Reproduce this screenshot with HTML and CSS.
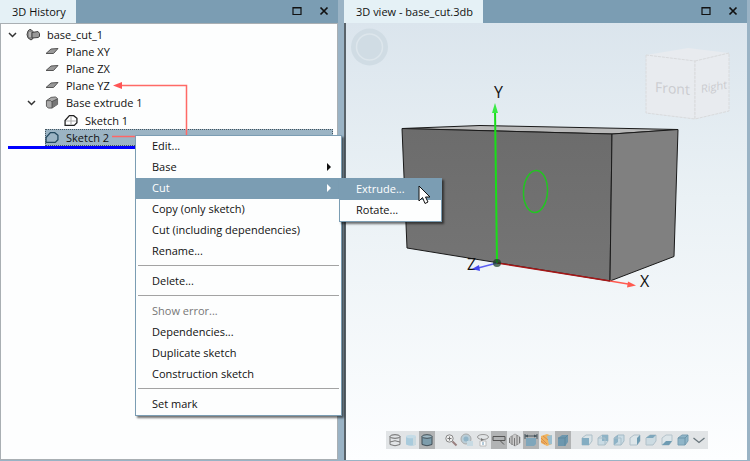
FILE: index.html
```html
<!DOCTYPE html>
<html lang="en">
<head>
<meta charset="utf-8">
<title>base_cut.3db</title>
<link rel="stylesheet" href="styles.css">
</head>
<body>
<svg class="defs" aria-hidden="true">
  <symbol id="i-chev" viewBox="0 0 9 6"><path d="M1 1l3.500 3.500L8 1" fill="none" stroke="#333" stroke-width="1.500"/></symbol>
  <symbol id="i-plane" viewBox="0 0 14 8"><path d="M1 6l5-4.500 7-.5-4.500 5z" fill="#999" stroke="#555"/></symbol>
  <symbol id="i-part" viewBox="0 0 14 12"><path d="M2 2.500Q3 .5 5 1l2 2v7l-2 1.500Q1 10 1 6z" fill="#8a8a8a" stroke="#444"/><path d="M6 4l6-1 1.500 2v3L12 9l-6 .5z" fill="#999" stroke="#444"/><path d="M4 3.500v5" stroke="#ddd"/></symbol>
  <symbol id="i-solid" viewBox="0 0 14 14"><path d="M1 5l5-3.500L11 1l2 2v6l-6 4H3L1 11z" fill="#aaa" stroke="#555"/><path d="M7 6l6-3v6l-6 4z" fill="#777"/><path d="M1 5h4.500L7 6.500V13M7 6l6-3" fill="none" stroke="#444" stroke-width=".8"/></symbol>
  <symbol id="i-sketch1" viewBox="0 0 13 12"><path d="M1 10.500V6l4-4.500h4L12 4v4l-2.500 2.500z" fill="#fff" stroke="#222" stroke-width="1.200"/><path d="M6.500 2v8M2 6.500h9" stroke="#aaa"/></symbol>
  <symbol id="i-sketch2" viewBox="0 0 13 12"><path d="M1 10.500V6l4-4.500h4L12 4v4l-2.500 2.500z" fill="none" stroke="#244a60" stroke-width="1.200"/></symbol>
  <symbol id="i-max" viewBox="0 0 10 10"><path d="M1 1.500h8v7H1zM1 2h8" fill="none" stroke="#111" stroke-width="1.200"/></symbol>
  <symbol id="i-close" viewBox="0 0 10 10"><path d="M1.500 1.500l7 7M8.500 1.500l-7 7" stroke="#111" stroke-width="1.700"/></symbol>
  <symbol id="t-wire" viewBox="0 0 14 14"><path d="M2 3.500v8q5 2.500 10 0v-8M2 9q5-2.500 10 0" fill="none" stroke="#777"/><ellipse cx="7" cy="3.500" rx="5" ry="1.800" fill="none" stroke="#666"/></symbol>
  <symbol id="t-shade" viewBox="0 0 14 14"><path d="M2 3.500v8q5 2.500 10 0v-8z" fill="#a9cbdc"/><ellipse cx="7" cy="3.500" rx="5" ry="1.800" fill="#c5dce7"/><path d="M9 5v7.500q2 0 3-1V4z" fill="#c9d9df"/></symbol>
  <symbol id="t-both" viewBox="0 0 14 14"><path d="M2 3.500v8q5 2.500 10 0v-8z" fill="#7d9dac" stroke="#414e56"/><ellipse cx="7" cy="3.500" rx="5" ry="1.800" fill="#9fb8c3" stroke="#414e56"/></symbol>
  <symbol id="t-zoom" viewBox="0 0 14 14"><circle cx="5.500" cy="5.500" r="3.700" fill="#eee" stroke="#888"/><path d="M8.500 8.500l4 4" stroke="#987f7f" stroke-width="2"/><path d="M3.500 5.500h4M5.500 3.500v4" stroke="#777"/></symbol>
  <symbol id="t-sphere" viewBox="0 0 14 14"><circle cx="6" cy="6" r="5" fill="#b9cdd7" stroke="#aaa"/><circle cx="6" cy="6" r="2.500" fill="#92b5c8"/><path d="M7 8h6v5H7z" fill="#c7dae3"/></symbol>
  <symbol id="t-rotate" viewBox="0 0 14 14"><ellipse cx="7" cy="4" rx="5.500" ry="2.500" fill="none" stroke="#999"/><path d="M4 8h6v5H4z" fill="#fff" stroke="#bbb"/><path d="M5 5l3 2-3 1z" fill="#777"/><path d="M7 9v3" stroke="#6897b5"/></symbol>
  <symbol id="t-plane" viewBox="0 0 14 14"><path d="M1 3.500h12v4H1zM8 7.500l4 4" fill="none" stroke="#555"/></symbol>
  <symbol id="t-section" viewBox="0 0 14 14"><path d="M2 4l5-3 5 3v6l-5 3-5-3z" fill="#ccc" stroke="#aaa"/><path d="M1.500 5v5M4 3v9M6.500 5v8M9 2v10M11.500 4v6" stroke="#777"/></symbol>
  <symbol id="t-dim" viewBox="0 0 14 14"><path d="M2 5h10v6l-2 2H2z" fill="#7fa6bb"/><path d="M1 1v5M13 1v5M1 3h12" stroke="#46545c" fill="none"/><path d="M1 3l3-1.500v3zM13 3l-3-1.500v3z" fill="#46545c"/></symbol>
  <symbol id="t-tex" viewBox="0 0 14 14"><path d="M1 3l6-2 5 2v8l-5 2-6-3z" fill="#efb45f"/><path d="M7 3l5-1v9l-3 1z" fill="#9cbfd0"/><path d="M1 5l6 6M1 8l4 3M3 3l5 4" stroke="#d98a4c"/></symbol>
  <symbol id="t-cube" viewBox="0 0 14 14"><path d="M2 5l4-3h6v7l-3 4H2z" fill="#6d97ae"/><path d="M2 5h7v8M9 5l3-3" fill="none" stroke="#5f879d"/></symbol>
  <symbol id="t-front" viewBox="0 0 14 14"><path d="M2 5l4-3h6v6l-3 4H2z" fill="#d9e3e7" stroke="#adbfc8"/><path d="M2 5h7v7H2z" fill="#84adc2"/></symbol>
  <symbol id="t-back" viewBox="0 0 14 14"><path d="M2 5l4-3h6v6l-3 4H2z" fill="#c9dbe4" stroke="#adbfc8"/><path d="M6 2h6v6H6z" fill="#8eb3c6"/><path d="M2 5h7v7" fill="none" stroke="#aabfca"/></symbol>
  <symbol id="t-left" viewBox="0 0 14 14"><path d="M2 5l4-3h6v6l-3 4H2z" fill="#c9dbe4" stroke="#a5bbc6"/><path d="M2 5l4-3v7l-4 3z" fill="#8eb3c6"/><path d="M2 5h7v7" fill="none" stroke="#aabfca"/></symbol>
  <symbol id="t-right" viewBox="0 0 14 14"><path d="M2 5l4-3h6v6l-3 4H2z" fill="#dce5e9" stroke="#b0c0c9"/><path d="M9 5l3-3v6l-3 4z" fill="#6e9bb2"/></symbol>
  <symbol id="t-top" viewBox="0 0 14 14"><path d="M2 5l4-3h6v6l-3 4H2z" fill="#ccdbe2" stroke="#b0c0c9"/><path d="M2 5l4-3h6L9 5z" fill="#7fa8bd"/></symbol>
  <symbol id="t-bottom" viewBox="0 0 14 14"><path d="M2 5l4-3h6v6l-3 4H2z" fill="#dce5e9" stroke="#b5c4cc"/><path d="M2 12l4-4h6l-3 4z" fill="#6e9bb2"/></symbol>
  <symbol id="t-iso" viewBox="0 0 14 14"><path d="M2 5l4-3h6v6l-3 4H2z" fill="#8fb5c8" stroke="#7ba0b4"/><path d="M2 5h7v7M9 5l3-3" fill="none" stroke="#6c95aa"/></symbol>
  <symbol id="t-more" viewBox="0 0 14 14"><path d="M1.500 5L7 9.500 12.500 5" fill="none" stroke="#68757c" stroke-width="1.300"/></symbol>
</svg>

<main class="workspace">
  <section class="pane history">
    <header class="pane-head">
      <h2 class="tab">3D History</h2>
      <div class="head-actions">
        <button aria-label="Maximize"><svg><use href="#i-max"/></svg></button>
        <button aria-label="Close"><svg><use href="#i-close"/></svg></button>
      </div>
    </header>
    <div class="tree-box">
      <ul class="tree">
        <li>
          <div class="node"><svg class="chev"><use href="#i-chev"/></svg><svg class="ico"><use href="#i-part"/></svg><span>base_cut_1</span></div>
          <ul>
            <li><div class="node leaf"><svg class="ico"><use href="#i-plane"/></svg><span>Plane XY</span></div></li>
            <li><div class="node leaf"><svg class="ico"><use href="#i-plane"/></svg><span>Plane ZX</span></div></li>
            <li><div class="node leaf"><svg class="ico"><use href="#i-plane"/></svg><span>Plane YZ</span></div></li>
            <li>
              <div class="node"><svg class="chev"><use href="#i-chev"/></svg><svg class="ico"><use href="#i-solid"/></svg><span>Base extrude 1</span></div>
              <ul class="inner"><li><div class="node leaf"><svg class="ico"><use href="#i-sketch1"/></svg><span>Sketch 1</span></div></li></ul>
            </li>
            <li><div class="node leaf selected"><svg class="ico"><use href="#i-sketch2"/></svg><span>Sketch 2</span></div></li>
          </ul>
          <div class="rollback"></div>
        </li>
      </ul>
    </div>
    <svg class="link-arrow" viewBox="0 0 80 56" aria-hidden="true"><path d="M8 5.500h66.500V55" fill="none" stroke="#ff6a66" stroke-width="1.500"/><path d="M1 5.500l9-3.500v7z" fill="#f55"/><path d="M0 56.500h24" stroke="#f66" stroke-width="1.500"/></svg>

    <ul class="menu context">
      <li><button>Edit...</button></li>
      <li><button>Base<i class="more"></i></button></li>
      <li class="open"><button>Cut<i class="more"></i></button>
        <ul class="menu sub">
          <li class="open"><button>Extrude...</button></li>
          <li><button>Rotate...</button></li>
        </ul>
        <svg class="cursor" viewBox="0 0 13 20" aria-hidden="true"><path d="M1 1v15l3.500-3.500L7 18.500l3-1.500-2.500-5H12z" fill="#fff" stroke="#111"/></svg>
      </li>
      <li><button>Copy (only sketch)</button></li>
      <li><button>Cut (including dependencies)</button></li>
      <li><button>Rename...</button></li>
      <li class="sep"></li>
      <li><button>Delete...</button></li>
      <li class="sep"></li>
      <li><button disabled>Show error...</button></li>
      <li><button>Dependencies...</button></li>
      <li><button>Duplicate sketch</button></li>
      <li><button>Construction sketch</button></li>
      <li class="sep"></li>
      <li><button>Set mark</button></li>
    </ul>
  </section>

  <section class="pane view">
    <header class="pane-head">
      <h2 class="tab">3D view - base_cut.3db</h2>
      <div class="head-actions">
        <button aria-label="Maximize"><svg><use href="#i-max"/></svg></button>
        <button aria-label="Close"><svg><use href="#i-close"/></svg></button>
      </div>
    </header>
    <div class="canvas">
      <svg class="scene" viewBox="346 23 401 437" role="img" aria-label="Extruded box with axes">
        <defs>
          <linearGradient id="front" x1="0" y1="0" x2="0" y2="1"><stop offset="0" stop-color="#6c6c6c"/><stop offset="1" stop-color="#757575"/></linearGradient>
        </defs>
        <circle cx="369.500" cy="47" r="18.500" fill="#d0dce4"/>
        <circle cx="369.500" cy="47" r="13" fill="none" stroke="#dde6ec" stroke-width="1.500"/>
        <g stroke="#d9dadc" stroke-dasharray="3 1" fill="#e8ebef">
          <path d="M646 55l42-7 41 5-34 8z" stroke="none"/>
          <path d="M646 55l49 6v58l-49-6z"/>
          <path d="M695 61l34-8v58l-34 8z"/>
        </g>
        <text class="face" transform="translate(655 92) skewY(5)">Front</text>
        <text class="face side" transform="translate(701 93) skewY(-10)">Right</text>
        <path d="M402 128.500L480 125.500 678 129.500 612 134z" fill="#b8b8b8" stroke="#1a1a1a"/>
        <path d="M402 128.500L612 134 610 281 407 248z" fill="url(#front)" stroke="#1a1a1a"/>
        <path d="M612 134L678 129.500 674 256.500 610 281z" fill="#808080" stroke="#1a1a1a"/>
        <text class="axis" x="467" y="270">Z</text>
        <path d="M497 263l-19 5" stroke="#5c60f4" stroke-width="1.500"/>
        <path d="M472 269l7-4 1 6z" fill="#4448ee"/>
        <path d="M497 263l113 18" stroke="#a81717" stroke-width="1.500"/>
        <path d="M610 281l18 3" stroke="#ff5a50" stroke-width="1.500"/>
        <path d="M636 285.500l-9 2 1-6z" fill="#ff5a50"/>
        <path d="M497 263L495 108" stroke="#18df18" stroke-width="2"/>
        <path d="M495 103l3 10h-6z" fill="#39ea45"/>
        <circle cx="497" cy="263" r="4" fill="#173a22" fill-opacity=".7"/>
        <ellipse cx="535.500" cy="191.500" rx="12" ry="21" fill="none" stroke="#22c522" stroke-width="1.500" transform="rotate(3 535.500 191.500)"/>
        <text class="axis" x="494" y="98">Y</text>
        <text class="axis" x="640" y="287">X</text>
      </svg>
      <div class="toolbar">
        <div class="group">
          <button aria-label="Wireframe"><svg><use href="#t-wire"/></svg></button>
          <button aria-label="Shaded"><svg><use href="#t-shade"/></svg></button>
          <button class="on" aria-label="Shaded with edges"><svg><use href="#t-both"/></svg></button>
        </div>
        <div class="group">
          <button aria-label="Zoom"><svg><use href="#t-zoom"/></svg></button>
          <button aria-label="Perspective"><svg><use href="#t-sphere"/></svg></button>
          <button aria-label="Rotate"><svg><use href="#t-rotate"/></svg></button>
          <button class="on" aria-label="Planes"><svg><use href="#t-plane"/></svg></button>
          <button aria-label="Section"><svg><use href="#t-section"/></svg></button>
          <button class="on" aria-label="Dimensions"><svg><use href="#t-dim"/></svg></button>
          <button aria-label="Texture"><svg><use href="#t-tex"/></svg></button>
          <button class="on" aria-label="Solid"><svg><use href="#t-cube"/></svg></button>
        </div>
        <div class="group">
          <button aria-label="Front view"><svg><use href="#t-front"/></svg></button>
          <button aria-label="Back view"><svg><use href="#t-back"/></svg></button>
          <button aria-label="Left view"><svg><use href="#t-left"/></svg></button>
          <button aria-label="Right view"><svg><use href="#t-right"/></svg></button>
          <button aria-label="Top view"><svg><use href="#t-top"/></svg></button>
          <button aria-label="Bottom view"><svg><use href="#t-bottom"/></svg></button>
          <button aria-label="Isometric view"><svg><use href="#t-iso"/></svg></button>
          <button aria-label="More"><svg><use href="#t-more"/></svg></button>
        </div>
      </div>
    </div>
  </section>
</main>
</body>
</html>
```

FILE: styles.css
```css
* { box-sizing: border-box; }
body {
  margin: 0;
  font: 11px/17px "Open Sans", "Noto Sans", sans-serif;
  color: #111;
  background: #9ab3c5;
}
ul { list-style: none; margin: 0; padding: 0; }
button { font: inherit; color: inherit; border: 0; padding: 0; background: none; }
svg { display: block; }
.defs { position: absolute; width: 0; height: 0; }

.workspace {
  display: grid;
  grid-template-columns: 338fr 403fr;
  column-gap: 6px;
  min-height: 100vh;
  padding: 0 3px 1px 0;
}
.pane { position: relative; display: flex; flex-direction: column; min-width: 0; }
.pane-head {
  display: flex;
  justify-content: space-between;
  height: 23px;
  background: #7b9db3;
}
.tab {
  margin: 0;
  padding: 0 10px 0 12px;
  font-size: 11px;
  font-weight: 400;
  line-height: 23px;
  background: #e5f1f6;
}
.head-actions { display: flex; align-items: center; gap: 17px; padding: 0 9px 2px 0; }
.head-actions svg { width: 10px; height: 10px; }

.tree-box {
  flex: 1;
  padding: 2px 4px 0 7px;
  background: #fdfefe;
  border: 1px solid #a9afb3;
}
.node { display: flex; align-items: center; height: 17px; }
.node span { padding-bottom: 1px; }
.chev { width: 9px; height: 6px; margin-right: 9px; }
.ico { width: 14px; height: 13px; margin-right: 7px; }
.tree ul { padding-left: 19px; }
.tree .inner { padding-top: 1px; }
.leaf { margin-left: 18px; }
.selected { background: #9bb4c4; outline: 1px dotted #45555f; outline-offset: -1px; }
.rollback { height: 3px; background: #00f; }

.link-arrow { position: absolute; left: 112px; top: 80px; width: 80px; height: 56px; overflow: visible; }

.menu {
  position: absolute;
  z-index: 2;
  background: #fdfefe;
  border: 1px solid #7b9db3;
  box-shadow: 2px 2px 2px rgba(0, 0, 0, .55);
}
.context { left: 135px; top: 135px; width: 207px; }
.sub { left: 203px; top: 0; width: 103px; }
.menu li { position: relative; }
.menu button {
  display: flex;
  align-items: center;
  justify-content: space-between;
  width: 100%;
  height: 21px;
  padding: 0 10px 2px 16px;
  text-align: left;
}
.menu .open > button { background: #7b9db3; color: #fff; }
.menu button:disabled { color: #777; }
.menu .sep { height: 9px; padding: 3px 2px; }
.menu .sep::before { content: ""; display: block; height: 1px; background: #a3a3a3; }
.more { border: solid transparent; border-width: 4px 0 4px 4px; border-left-color: currentColor; }
.cursor { position: absolute; z-index: 3; left: 282px; top: 7px; width: 13px; height: 20px; }

.canvas {
  position: relative;
  flex: 1;
  border-left: 2px solid #59636a;
  background: linear-gradient(#dbe5ed, #eaf1f5 40%, #fdfeff);
}
.scene { position: absolute; inset: 0; width: 100%; height: 100%; }
.axis { font: 16px "Open Sans", sans-serif; fill: #111; }
.face { font: 14px "Open Sans", sans-serif; fill: #cbccd0; }
.side { font-size: 11px; }

.toolbar {
  position: absolute;
  left: 50%;
  bottom: 11px;
  transform: translateX(-50%);
  display: flex;
  gap: 8px;
  padding: 0 1px;
  background: #e1e4e6;
}
.group { display: flex; }
.toolbar button { width: 16px; height: 18px; padding: 2px 1px; }
.toolbar button.on { background: #b1b3b4; }
.toolbar svg { width: 14px; height: 14px; }
```
